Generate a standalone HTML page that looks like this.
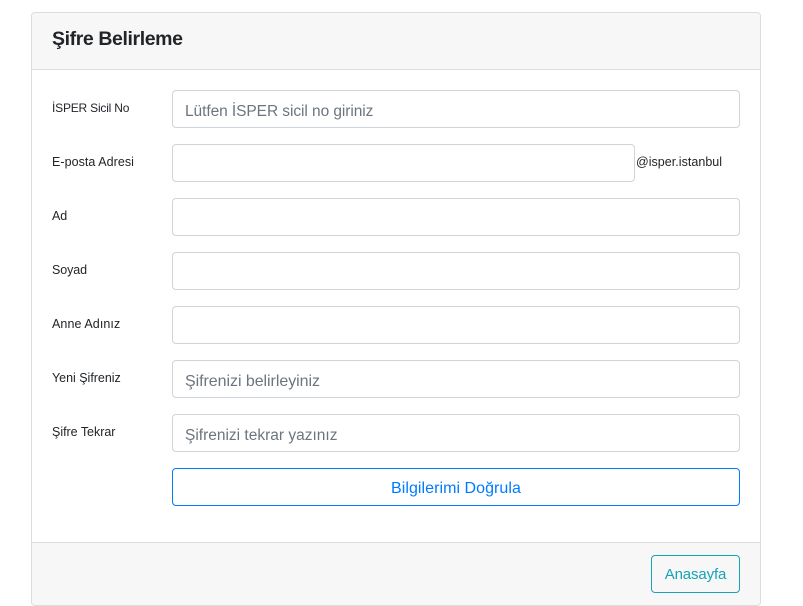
<!DOCTYPE html>
<html lang="tr"><head><meta charset="utf-8"><title>Şifre Belirleme</title>
<style>
html,body{margin:0;padding:0;background:#fff;width:803px;height:606px;overflow:hidden}
body{position:relative;font-family:"Liberation Sans",sans-serif;color:#212529}
div,span{position:absolute;box-sizing:border-box;white-space:nowrap}
.card{left:31px;top:12px;width:730px;height:594px;border:1px solid #dcdcdc;border-radius:4px;background:#fff;overflow:hidden}
.hd{left:32px;top:13px;width:728px;height:57px;background:#f7f7f7;border-bottom:1px solid #dcdcdc;border-radius:3px 3px 0 0}
.ft{left:32px;top:542px;width:728px;height:63px;background:#f7f7f7;border-top:1px solid #dcdcdc;border-radius:0 0 3px 3px}
.title{left:52px;top:28px;font-size:19.5px;line-height:23px;font-weight:bold;letter-spacing:-.4px}
.l{left:52px;font-size:12.5px;line-height:15px;letter-spacing:-.1px}
.i{left:172px;width:568px;height:38px;border:1px solid #ced4da;border-radius:4px;background:#fff}
.p{left:185px;font-size:16px;line-height:19px;color:#6c757d}
.btn{left:172px;top:468px;width:568px;height:38px;border:1px solid #007bff;border-radius:4px;text-align:center;color:#007bff;font-size:16px;line-height:39px;letter-spacing:.05px}
.home{left:651px;top:555px;width:89px;height:38px;border:1px solid #17a2b8;border-radius:4px;text-align:center;color:#17a2b8;font-size:15px;line-height:38px;letter-spacing:-.12px}
</style></head><body>
<div class="card"></div>
<div class="hd"></div>
<div class="ft"></div>
<div class="title">Şifre Belirleme</div>

<div class="l" style="top:101px;font-size:12px;letter-spacing:-.2px">İSPER Sicil No</div>
<div class="i" style="top:90px"></div>
<div class="p" style="top:102px;font-size:15.5px;letter-spacing:-.07px">Lütfen İSPER sicil no giriniz</div>

<div class="l" style="top:155px;letter-spacing:.05px">E-posta Adresi</div>
<div class="i" style="top:144px;width:463px"></div>
<div class="l" style="top:155px;left:636px;letter-spacing:.03px">@isper.istanbul</div>

<div class="l" style="top:209px">Ad</div>
<div class="i" style="top:198px"></div>

<div class="l" style="top:263px">Soyad</div>
<div class="i" style="top:252px"></div>

<div class="l" style="top:317px;letter-spacing:.08px">Anne Adınız</div>
<div class="i" style="top:306px"></div>

<div class="l" style="top:371px;letter-spacing:-.02px">Yeni Şifreniz</div>
<div class="i" style="top:360px"></div>
<div class="p" style="top:372px;letter-spacing:-.05px">Şifrenizi belirleyiniz</div>

<div class="l" style="top:425px;letter-spacing:-.02px">Şifre Tekrar</div>
<div class="i" style="top:414px"></div>
<div class="p" style="top:426px;font-size:15.5px;letter-spacing:0">Şifrenizi tekrar yazınız</div>

<div class="btn">Bilgilerimi Doğrula</div>
<div class="home">Anasayfa</div>
</body></html>
